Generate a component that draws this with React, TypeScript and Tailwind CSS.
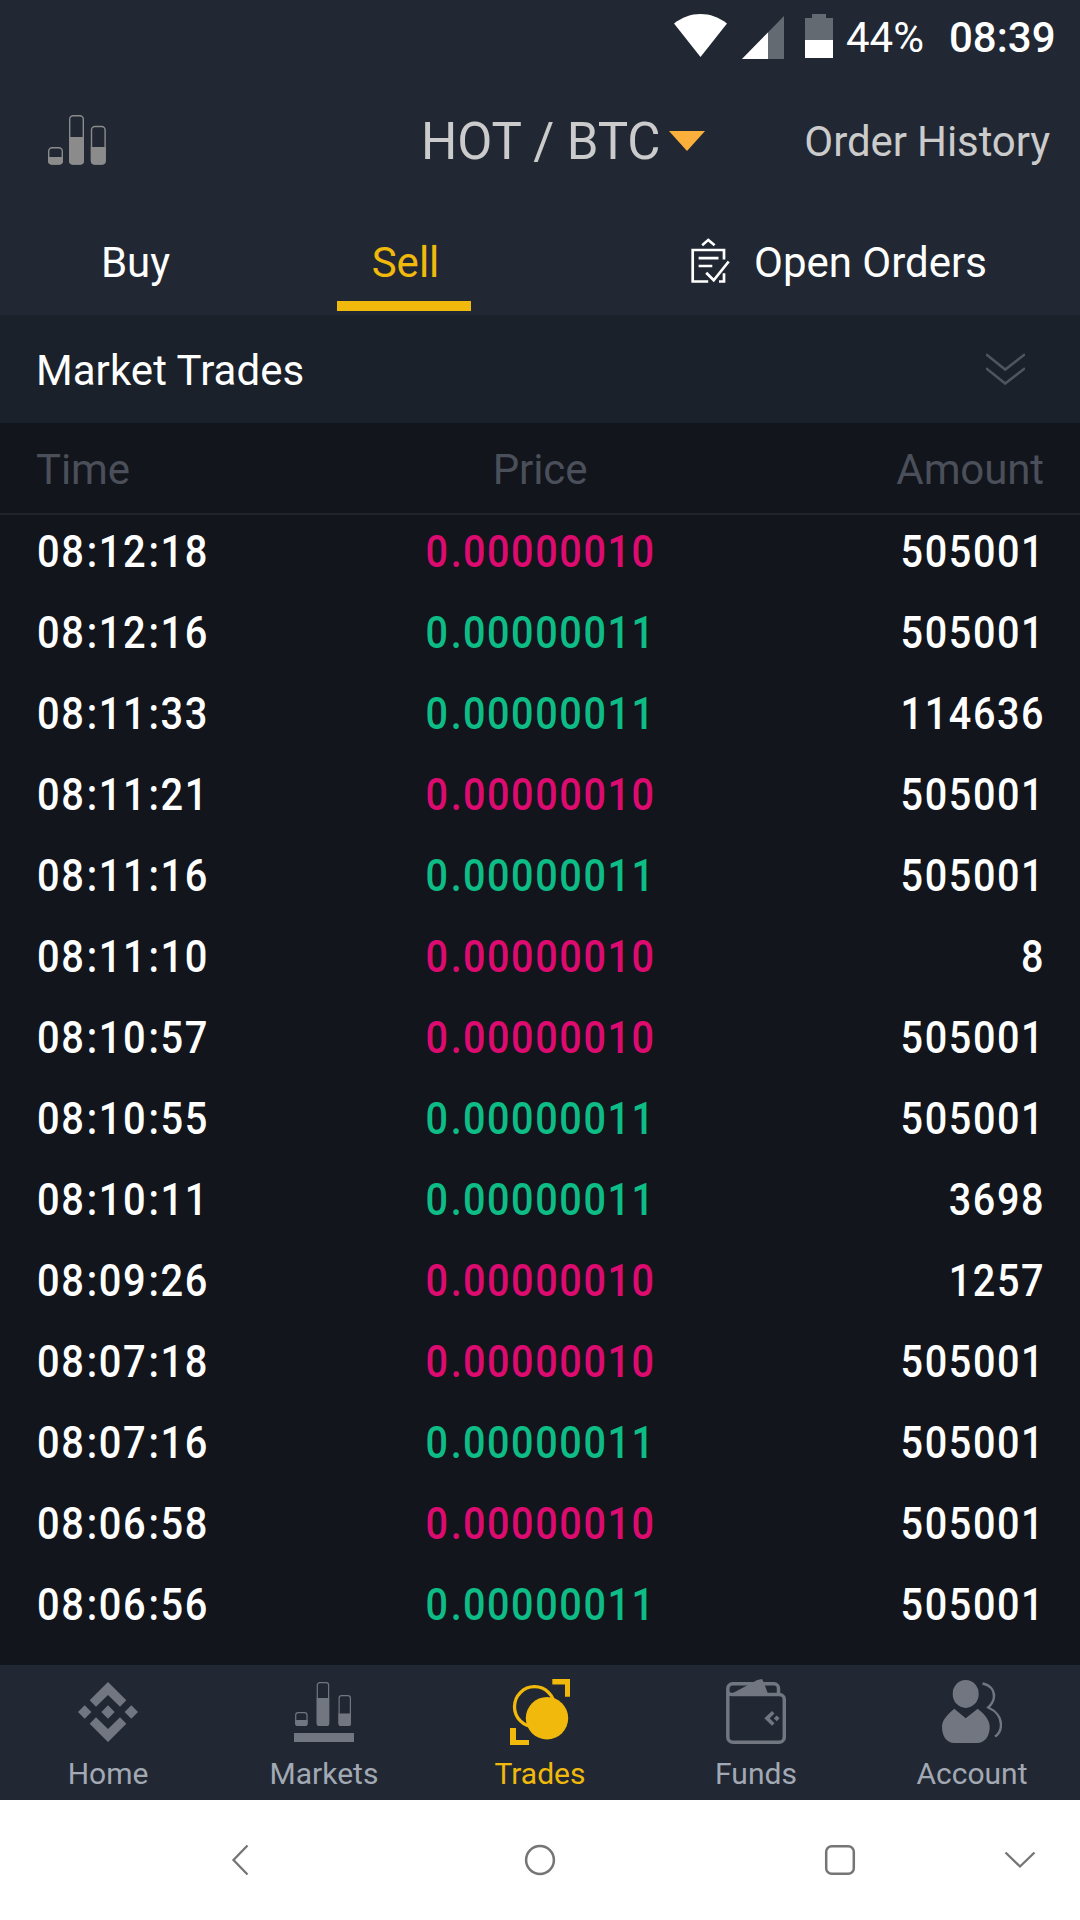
import type { ReactNode } from "react";

type Trade = { time: string; price: string; amount: string; side: "buy" | "sell" };

const LOW = "0.00000010";
const HIGH = "0.00000011";

const trades: Trade[] = [
  { time: "08:12:18", price: LOW, amount: "505001", side: "sell" },
  { time: "08:12:16", price: HIGH, amount: "505001", side: "buy" },
  { time: "08:11:33", price: HIGH, amount: "114636", side: "buy" },
  { time: "08:11:21", price: LOW, amount: "505001", side: "sell" },
  { time: "08:11:16", price: HIGH, amount: "505001", side: "buy" },
  { time: "08:11:10", price: LOW, amount: "8", side: "sell" },
  { time: "08:10:57", price: LOW, amount: "505001", side: "sell" },
  { time: "08:10:55", price: HIGH, amount: "505001", side: "buy" },
  { time: "08:10:11", price: HIGH, amount: "3698", side: "buy" },
  { time: "08:09:26", price: LOW, amount: "1257", side: "sell" },
  { time: "08:07:18", price: LOW, amount: "505001", side: "sell" },
  { time: "08:07:16", price: HIGH, amount: "505001", side: "buy" },
  { time: "08:06:58", price: LOW, amount: "505001", side: "sell" },
  { time: "08:06:56", price: HIGH, amount: "505001", side: "buy" },
];

// separators get their own width so the digits stay on an even pitch
function Digits({ value }: { value: string }) {
  return (
    <>
      {value.split(/([:.])/).map((part, i) =>
        part === ":" || part === "." ? <span key={i} className="inline-block w-[15px] text-center tracking-normal">{part}</span> : part
      )}
    </>
  );
}

function StatusBar() {
  return (
    <div className="flex h-[75px] items-center pl-[674px] text-white">
      <svg className="mb-1 h-[44px] w-[53px]" viewBox="0 0 53 44">
        <path fill="currentColor" d="M0 9.5C8 3.3 17 0 26.5 0S45 3.3 53 9.5L26.5 43z" />
      </svg>
      <svg className="mb-[1px] ml-[15px] h-[44px] w-[42px]" viewBox="0 0 42 44">
        <path fill="#636a72" d="M42 1V44H0z" />
        <path fill="currentColor" d="M26 17.4V44H0z" />
      </svg>
      <svg className="mb-[3px] ml-[21px] h-[44px] w-[28px]" viewBox="0 0 28 44">
        <path fill="#636a72" d="M7 0H21V4H28V44H0V4H7z" />
        <path fill="currentColor" d="M0 26H28V44H0z" />
      </svg>
      <span className="ml-[13px] w-[103px] text-[42px] leading-none">44%</span>
      <span className="text-[42px] leading-none font-medium">08:39</span>
    </div>
  );
}

function Header() {
  return (
    <div className="flex h-[132px] items-center pr-[30px] pl-[48px] text-[#cbcbcb]">
      <svg className="mb-[3px] h-[50px] w-[58px] text-[#8b8b8b]" viewBox="0 0 58 50" fill="none" stroke="currentColor" strokeWidth="1.4">
        <rect x="0.7" y="32.7" width="13.6" height="16.3" rx="3.5" />
        <rect x="21.7" y="0.7" width="13.6" height="48.3" rx="3.5" />
        <rect x="43.5" y="11.5" width="13.6" height="37.5" rx="3.5" />
        <path fill="currentColor" stroke="none" d="M0 42H15V46a3.5 3.5 0 0 1-3.5 3.5H3.5A3.5 3.5 0 0 1 0 46zM21 22H36V46a3.5 3.5 0 0 1-3.5 3.5H24.5A3.5 3.5 0 0 1 21 46zM42.8 32H57.8V46a3.5 3.5 0 0 1-3.5 3.5H46.3A3.5 3.5 0 0 1 42.8 46z" />
      </svg>
      <div className="ml-[315px] flex items-center">
        <span className="w-[248px] text-[51px] leading-none tracking-[-0.15px] whitespace-nowrap">HOT / BTC</span>
        <svg className="h-[20px] w-[36px]" viewBox="0 0 36 20">
          <path fill="#fbb03b" d="M0 0H36L18 20z" />
        </svg>
      </div>
      <span className="ml-auto pt-[2px] text-[42px] leading-none tracking-[-0.1px] whitespace-nowrap">Order History</span>
    </div>
  );
}

function Tabs() {
  return (
    <div className="flex h-[108px] pb-[4px] text-[42px] leading-none text-white">
      <div className="flex w-[270px] items-center justify-center pt-[8px] pl-px">Buy</div>
      <div className="flex w-[268px] flex-col items-center text-[#f0b90b]">
        <div className="flex flex-1 items-center pt-[18px] pl-[3px]">Sell</div>
        <div className="h-[10px] w-[134px] bg-[#f0b90b]" />
      </div>
      <div className="flex flex-1 items-center gap-[24px] pl-[153px]">
        <svg className="mt-[4px] h-[46px] w-[39px]" viewBox="0 0 39 46" fill="none" stroke="currentColor" strokeWidth="2.7">
          <path d="M11.2 7.3L17.3 1.9L23.6 7.3" strokeWidth="2.6" />
          <path d="M33 21.5V12H1.7V43.5H17.2M33 35.3V43.5H28" />
          <path d="M7.6 20.2H27.5M7.6 28H21.3M15.2 34.7L22.7 42.3L37.7 23.5" />
        </svg>
        <span className="pt-[8px]">Open Orders</span>
      </div>
    </div>
  );
}

function NavItem({ label, active, children }: { label: string; active?: boolean; children: ReactNode }) {
  return (
    <div className={`flex w-[216px] flex-col items-center pt-[14px] ${active ? "text-[#f0b90b]" : "text-[#727680]"}`}>
      <svg className="h-[66px] w-[60px]" viewBox="0 0 60 66" fill="currentColor">
        {children}
      </svg>
      <span className={`mt-[13px] text-[30px] leading-[32px] ${active ? "" : "text-[#a2a8b4]"}`}>{label}</span>
    </div>
  );
}

function BottomNav() {
  return (
    <nav className="flex h-[135px] bg-[#212833]">
      <NavItem label="Home">
        <path d="M30 3L48.3 21.3L42 27.7L30 16L18 27.7L11.7 21.3zM30 63L48.3 44.7L42 38.3L30 50L18 38.3L11.7 44.7z" />
        <path d="M30 26.3L36.7 33L30 39.7L23.3 33zM6.7 26.3L13.4 33L6.7 39.7L0 33zM53.3 26.3L60 33L53.3 39.7L46.6 33z" />
      </NavItem>
      <NavItem label="Markets">
        <g fill="none" stroke="currentColor" strokeWidth="1.2">
          <rect x="1.7" y="33.6" width="11.3" height="12.8" rx="2.5" />
          <rect x="23.3" y="3.6" width="11.3" height="42.8" rx="2.5" />
          <rect x="45.1" y="16.6" width="11.3" height="29.8" rx="2.5" />
        </g>
        <path d="M1.1 41H13.6V44.5a2.5 2.5 0 0 1-2.5 2.5H3.6A2.5 2.5 0 0 1 1.1 44.5zM22.7 19H35.2V44.5a2.5 2.5 0 0 1-2.5 2.5H25.2A2.5 2.5 0 0 1 22.7 44.5zM44.5 34.5H57V44.5a2.5 2.5 0 0 1-2.5 2.5H47A2.5 2.5 0 0 1 44.5 44.5z" />
        <rect y="54" width="60" height="9" />
      </NavItem>
      <NavItem label="Trades" active>
        <circle cx="24.5" cy="27.7" r="20" fill="none" stroke="currentColor" strokeWidth="3.3" />
        <circle cx="37" cy="39.2" r="21.2" />
        <path d="M42.3 0H60V17.7H55V5.5H42.3zM0 49H6V61H19V66H0z" />
      </NavItem>
      <NavItem label="Funds">
        <path
          d="M1.8 12V58a5.3 5.3 0 0 0 5.3 5.3H53a5.3 5.3 0 0 0 5.3-5.3V20.5a5 5 0 0 0-5-5H5.5A3.7 3.7 0 0 1 1.8 12V9.5A4.7 4.7 0 0 1 6.5 4.8H48A4.5 4.5 0 0 1 52.5 9.3V15"
          fill="none" stroke="currentColor" strokeWidth="3.5" />
        <path d="M6 14.5L31.3 1L36 0L37.5 3L42.3 15.5H6z" />
        <path d="M38.3 39.3L46 32L48.5 34.5L43.7 39.3L48.5 44.2L46 46.7zM50.7 36.4L53.6 39.3L50.7 42.2L47.8 39.3z" />
      </NavItem>
      <NavItem label="Account">
        <ellipse cx="23.7" cy="14.9" rx="13" ry="14" />
        <path d="M12.3 29.7L23.7 39.3L35.7 29.7C43 35.5 47.7 41 47.7 48C47.7 57 43 64 35 64H12.5C4.5 64 0 57 0 48C0 41 5 36 12.3 29.7z" />
        <path d="M40.5 4.5C48 6 52 11 52 17C52 22 49.5 25.5 46.3 28.5C54 32 59 38.5 59 45.5C59 51 57 55 53 57.5" fill="none" stroke="currentColor" strokeWidth="2.4" />
      </NavItem>
    </nav>
  );
}

function SystemNav() {
  return (
    <div className="flex h-[120px] items-center bg-white pl-[225px] text-[#757575]">
      <svg className="h-[32px] w-[30px]" viewBox="0 0 30 32" fill="none" stroke="currentColor" strokeWidth="2.3">
        <path d="M22.5 1.5L8.5 16L22.5 30.5" />
      </svg>
      <svg className="ml-[269px] h-[32px] w-[32px]" viewBox="0 0 32 32" fill="none" stroke="currentColor" strokeWidth="2.5">
        <circle cx="16" cy="16" r="13.9" />
      </svg>
      <svg className="ml-[268px] h-[32px] w-[32px]" viewBox="0 0 32 32" fill="none" stroke="currentColor" strokeWidth="2.5">
        <rect x="2.2" y="2.2" width="27.6" height="27.6" rx="5.5" />
      </svg>
      <svg className="ml-[148px] h-[18px] w-[32px]" viewBox="0 0 32 18" fill="none" stroke="currentColor" strokeWidth="2.3">
        <path d="M1.5 1.5L16 15.5L30.5 1.5" />
      </svg>
    </div>
  );
}

export default function App() {
  return (
    <div className="flex h-[1920px] w-[1080px] flex-col overflow-hidden bg-[#12151c] font-['Roboto',sans-serif]">
      <header className="bg-[#212833]">
        <StatusBar />
        <Header />
        <Tabs />
      </header>

      <div className="flex h-[108px] items-center justify-between bg-[#1b212a] pr-[55px] pl-[36px]">
        <span className="pt-[4px] text-[42px] leading-none tracking-[0.05px] text-white">Market Trades</span>
        <svg className="h-[32px] w-[39px]" viewBox="0 0 39 32" fill="none" stroke="#4f545f" strokeWidth="2.6">
          <path d="M0 1.2L19.2 16.5L39 1.2M0 15.2L19.2 30.5L39 15.2" />
        </svg>
      </div>

      <div className="grid h-[92px] grid-cols-3 items-center border-b-2 border-[#20242d] px-[36px] pt-[4px] text-[42px] leading-none tracking-[-0.1px] text-[#4a4f5a]">
        <span>Time</span>
        <span className="text-center">Price</span>
        <span className="text-right">Amount</span>
      </div>

      <div className="flex-1">
        {trades.map((t) => (
          <div key={t.time} className="grid h-[81px] grid-cols-3 pr-[35px] pl-[36.5px] text-[45px] leading-[73px] font-medium tracking-[1.8px] text-white">
            <span className="origin-left scale-x-[0.885]"><Digits value={t.time} /></span>
            <span className={`scale-x-[0.88] pr-[1px] text-center ${t.side === "buy" ? "text-[#0ebd85]" : "text-[#dd0b70]"}`}>
              <Digits value={t.price} />
            </span>
            <span className="origin-right scale-x-[0.88] text-right">{t.amount}</span>
          </div>
        ))}
      </div>

      <BottomNav />
      <SystemNav />
    </div>
  );
}
